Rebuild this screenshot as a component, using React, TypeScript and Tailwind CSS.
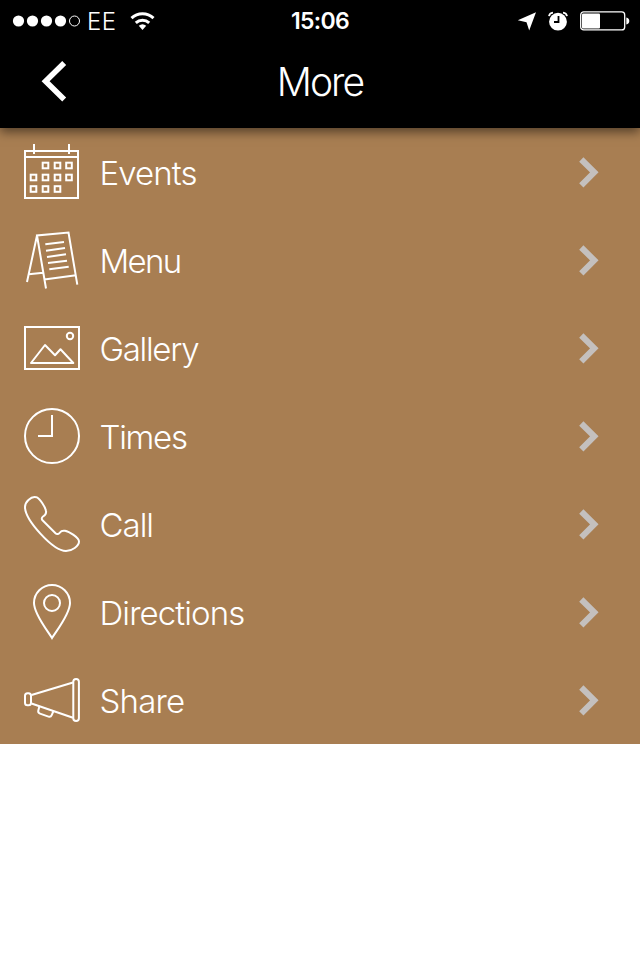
import type { ReactNode } from "react";

const EventsIcon = () => (
  <>
    <path d="M1 7h53v47H1zM1 13h53M10 0v10M45 0v10" />
    {[
      [21.5, 21.5], [33.5, 21.5], [45, 21.5],
      [9.5, 33.5], [21.5, 33.5], [33.5, 33.5], [45, 33.5],
      [9.5, 45], [21.5, 45], [33.5, 45],
    ].map(([x, y]) => (
      <rect key={`${x}-${y}`} x={x - 2.8} y={y - 2.8} width="5.6" height="5.6" />
    ))}
  </>
);

const MenuIcon = () => (
  <>
    <path d="M22 56.5 13 3.5 44.5 0.5 53.3 52.7M13 3.5 3 50M4.7 42.3 19.3 40.7M20.3 47.4 52 43.3" />
    <path d="M21.3 12.3 40 10M22 18.7 41 16M23 25 42 22.3M24 31 43 28.7M25.3 37.3 44.7 34.7" />
  </>
);

const GalleryIcon = () => (
  <>
    <rect x="1" y="7" width="54" height="42" />
    <circle cx="46" cy="16" r="3.2" />
    <path d="M7 43 21 25 31 35.2 36.5 29.3 49.3 43Z" strokeLinejoin="round" />
  </>
);

const TimesIcon = () => (
  <>
    <circle cx="28" cy="28" r="27" />
    <path d="M28 7v21H14" />
  </>
);

const CallIcon = () => (
  <path d="M10.5 1C7 1 1 5.5 1 11 1 24 29 55 42 55 48 55 55 50 55 45.5 55 41.5 45 35.5 41 34.8 38 34.3 37 35 36 36.5 35 38 33 38.8 31.5 37.3L18.5 24.3C17.5 23.3 17.5 21.5 19 20.5 21.5 19 22.5 17.5 22 15 21.3 11 16 3 13 1.4 12.3 1 11.5 1 10.5 1Z" />
);

const DirectionsIcon = () => (
  <>
    <path d="M28 54C23 46 10 30 10 19a18 18 0 0 1 36 0C46 30 33 46 28 54Z" />
    <circle cx="28" cy="19" r="8" />
  </>
);

const ShareIcon = () => (
  <>
    <rect x="1" y="21.3" width="6" height="12" rx="2.5" />
    <rect x="49.3" y="7" width="5.6" height="42" rx="2.8" />
    <path d="M7.5 23 49 10.5M7.5 31.5 49 45.8" />
    <path d="M15.5 34 14.3 38.5Q13.8 40.8 16 41.6L24.5 44.6Q26.8 45.3 27.7 43.2L29.5 39" />
  </>
);

const rows: { label: string; icon: ReactNode; tracking: string }[] = [
  { label: "Events", icon: <EventsIcon />, tracking: "tracking-[-0.9px]" },
  { label: "Menu", icon: <MenuIcon />, tracking: "tracking-[-1.7px]" },
  { label: "Gallery", icon: <GalleryIcon />, tracking: "tracking-[-1.3px]" },
  { label: "Times", icon: <TimesIcon />, tracking: "tracking-[-1.3px]" },
  { label: "Call", icon: <CallIcon />, tracking: "tracking-[-1px]" },
  { label: "Directions", icon: <DirectionsIcon />, tracking: "tracking-[-0.9px]" },
  { label: "Share", icon: <ShareIcon />, tracking: "tracking-[-0.8px]" },
];

function StatusBar() {
  return (
    <div className="grid h-10 grid-cols-[1fr_auto_1fr] items-center pt-px">
      <div className="flex items-center pl-3">
        <svg width="70" height="14" viewBox="0 0 70 14" fill="white">
          {[6.5, 20.5, 34.5, 48.5].map((x) => (
            <circle key={x} cx={x} cy="7" r="5.6" />
          ))}
          <circle cx="62.5" cy="7" r="5" fill="none" stroke="white" />
        </svg>
        <span className="ml-[5px] w-[46px] pt-0.5 text-[24px] leading-none font-light tracking-[0.4px]">EE</span>
        <svg className="-ml-[3px]" width="26" height="20" viewBox="0 0 26 20" fill="none" stroke="white" strokeWidth="3">
          <path d="M1.5 7.2a16 16 0 0 1 22 0M5.8 11.8a10 10 0 0 1 13.400 0" />
          <path d="M8.8 14.8a5.6 5.6 0 0 1 7.4 0L12.5 19Z" fill="white" stroke="none" />
        </svg>
      </div>
      <span className="pt-0.5 text-[23px] leading-none font-semibold tracking-[-0.7px]">15:06</span>
      <div className="flex items-center justify-end pr-[10px]">
        <svg width="20" height="20" viewBox="0 0 20 20" fill="white">
          <path d="M20 1.3 13.2 19.5 10.5 11.300 1.800 9.300Z" />
        </svg>
        <svg className="ml-[11px]" width="22" height="20" viewBox="0 0 22 20">
          <circle cx="11" cy="10.7" r="8.900" fill="white" />
          <path d="M2 5.200Q2.500 2 6 1.600M20 5.200Q19.500 2 16 1.600" fill="none" stroke="white" strokeWidth="1.800" />
          <path d="M11.500 5v6H7" fill="none" stroke="black" strokeWidth="1.800" />
        </svg>
        <svg className="ml-[11px]" width="50" height="20" viewBox="0 0 50 20">
          <rect x="0.700" y="0.900" width="44" height="18" rx="3" fill="none" stroke="white" strokeWidth="1.300" />
          <rect x="2" y="2.500" width="18" height="15" rx="1" fill="white" />
          <path d="M46.300 6.500q3 .8 3 3.500t-3 3.500Z" fill="white" />
        </svg>
      </div>
    </div>
  );
}

export default function App() {
  return (
    <div className="flex h-[960px] w-[640px] flex-col overflow-hidden bg-white font-['Inter',sans-serif] text-white">
      <header className="z-10 h-32 shrink-0 bg-black shadow-[0_4px_10px_rgba(0,0,0,0.5)]">
        <StatusBar />
        <div className="grid h-[84px] grid-cols-[1fr_auto_1fr] items-center">
          <svg className="ml-10" width="28" height="44" viewBox="0 0 28 44" fill="none" stroke="white" strokeWidth="5.6">
            <path d="M24.2 3 5.6 21.2 24.2 39.4" />
          </svg>
          <h1 className="-mt-0.5 text-[39px] leading-none font-light tracking-[-1.9px]">More</h1>
        </div>
      </header>
      <ul className="shrink-0 bg-[#a87e52]">
        {rows.map(({ label, icon, tracking }) => (
          <li key={label} className="flex h-[88px] items-center pl-6 pr-10">
            <svg className="shrink-0 overflow-visible" width="56" height="56" viewBox="0 0 56 56" fill="none" stroke="white" strokeWidth="2">
              {icon}
            </svg>
            <span className={`ml-[19.5px] pt-0.5 text-[33px] leading-10 font-light ${tracking}`}>{label}</span>
            <svg className="ml-auto" width="22" height="32" viewBox="0 0 22 32" fill="none" stroke="#c4c0be" strokeWidth="6">
              <path d="M3.3 3.5 16.3 16.3 3.3 29.3" />
            </svg>
          </li>
        ))}
      </ul>
    </div>
  );
}
